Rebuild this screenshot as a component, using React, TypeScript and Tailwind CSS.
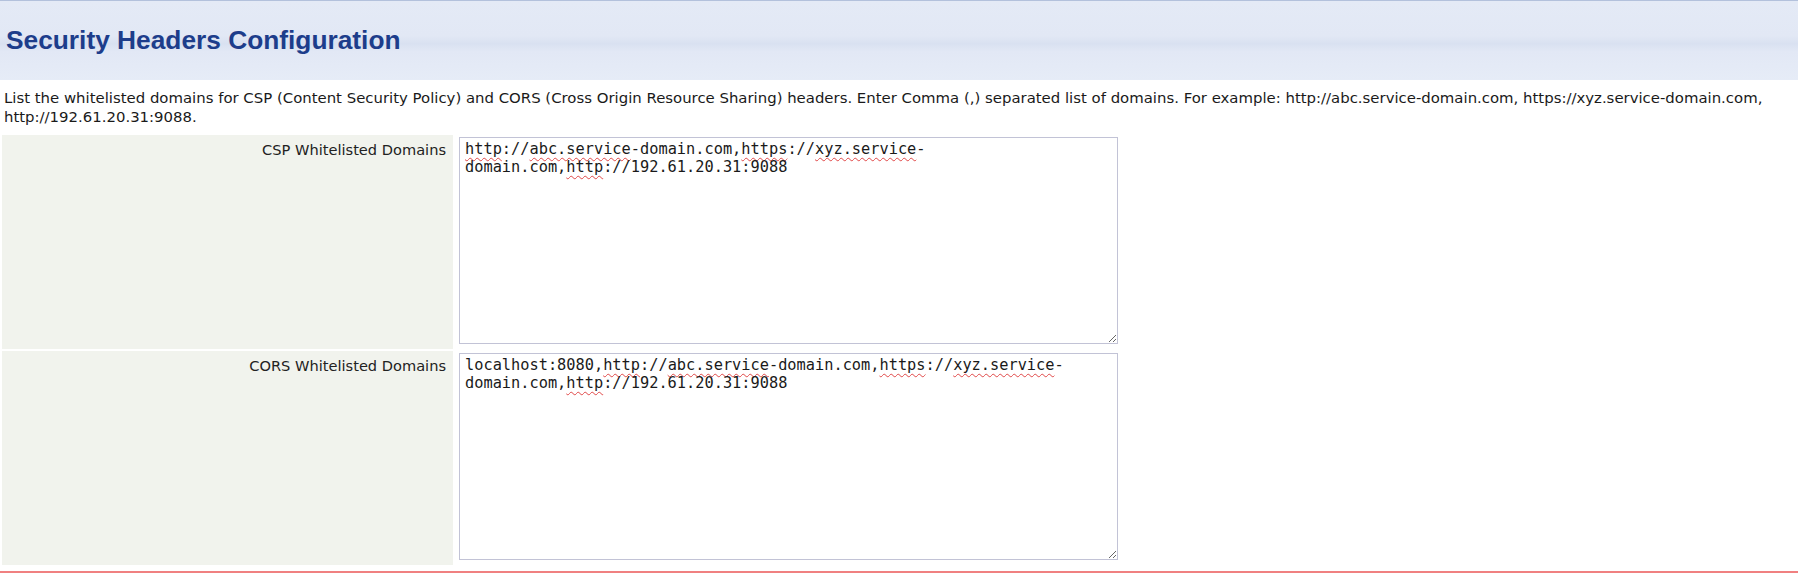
import React from 'react';

const Squiggle: React.FC<{ children: React.ReactNode }> = ({ children }) => (
  <span className="underline decoration-wavy decoration-[#e04848] decoration-1 underline-offset-[3px]">{children}</span>
);

const Field: React.FC<{ label: string; children: React.ReactNode }> = ({ label, children }) => (
  <div className="flex gap-[2px] h-[214px]">
    <div className="w-[451px] shrink-0 bg-[#f1f3ed] text-right pr-[7px] pt-[6px] text-[14.6px] leading-[18px] text-[#222]">
      {label}
    </div>
    <div className="pl-[4px] pt-[2px]">
      <div className="w-[659px] h-[207px] resize overflow-auto border border-[#c2c3d6] bg-white pl-[5px] pr-[44px] pt-[2px] font-['DejaVu_Sans_Mono',monospace] text-[15.3px] leading-[18px] text-[#1a1a1a]">
        {children}
      </div>
    </div>
  </div>
);

export default function App() {
  return (
    <div className="w-[1798px] h-[583px] bg-white font-['DejaVu_Sans',Verdana,sans-serif] overflow-hidden">
      <div className="h-[80px] border-t border-[#b3c1dc] bg-[linear-gradient(to_bottom,#e4eaf6_0%,#e2e8f5_44%,#d9e1f1_54%,#e2e8f5_64%,#e6ecf7_100%)] px-[6px] pt-[24px]">
        <h1 className="font-['Liberation_Sans',Arial,sans-serif] text-[26.3px] leading-[30px] font-bold text-[#1d3d8b]">Security Headers Configuration</h1>
      </div>

      <p className="px-[4px] pt-[9px] text-[14.9px] leading-[18.5px] text-[#1a1a1a]">
        List the whitelisted domains for CSP (Content Security Policy) and CORS (Cross Origin Resource Sharing) headers. Enter Comma (,) separated list of domains. For example: http://abc.service-domain.com, https://xyz.service-domain.com, http://192.61.20.31:9088.
      </p>

      <div className="flex flex-col gap-[2px] px-[2px] mt-[9px]">
        <Field label="CSP Whitelisted Domains">
          <Squiggle>http</Squiggle>://<Squiggle>abc.service</Squiggle>-domain.com,<Squiggle>https</Squiggle>://<Squiggle>xyz.service</Squiggle>-domain.com,<Squiggle>http</Squiggle>://192.61.20.31:9088
        </Field>
        <Field label="CORS Whitelisted Domains">
          localhost:8080,<Squiggle>http</Squiggle>://<Squiggle>abc.service</Squiggle>-domain.com,<Squiggle>https</Squiggle>://<Squiggle>xyz.service</Squiggle>-domain.com,<Squiggle>http</Squiggle>://192.61.20.31:9088
        </Field>
      </div>

      <div className="mt-[6px] h-[2px] bg-[#f08080]" />
    </div>
  );
}
